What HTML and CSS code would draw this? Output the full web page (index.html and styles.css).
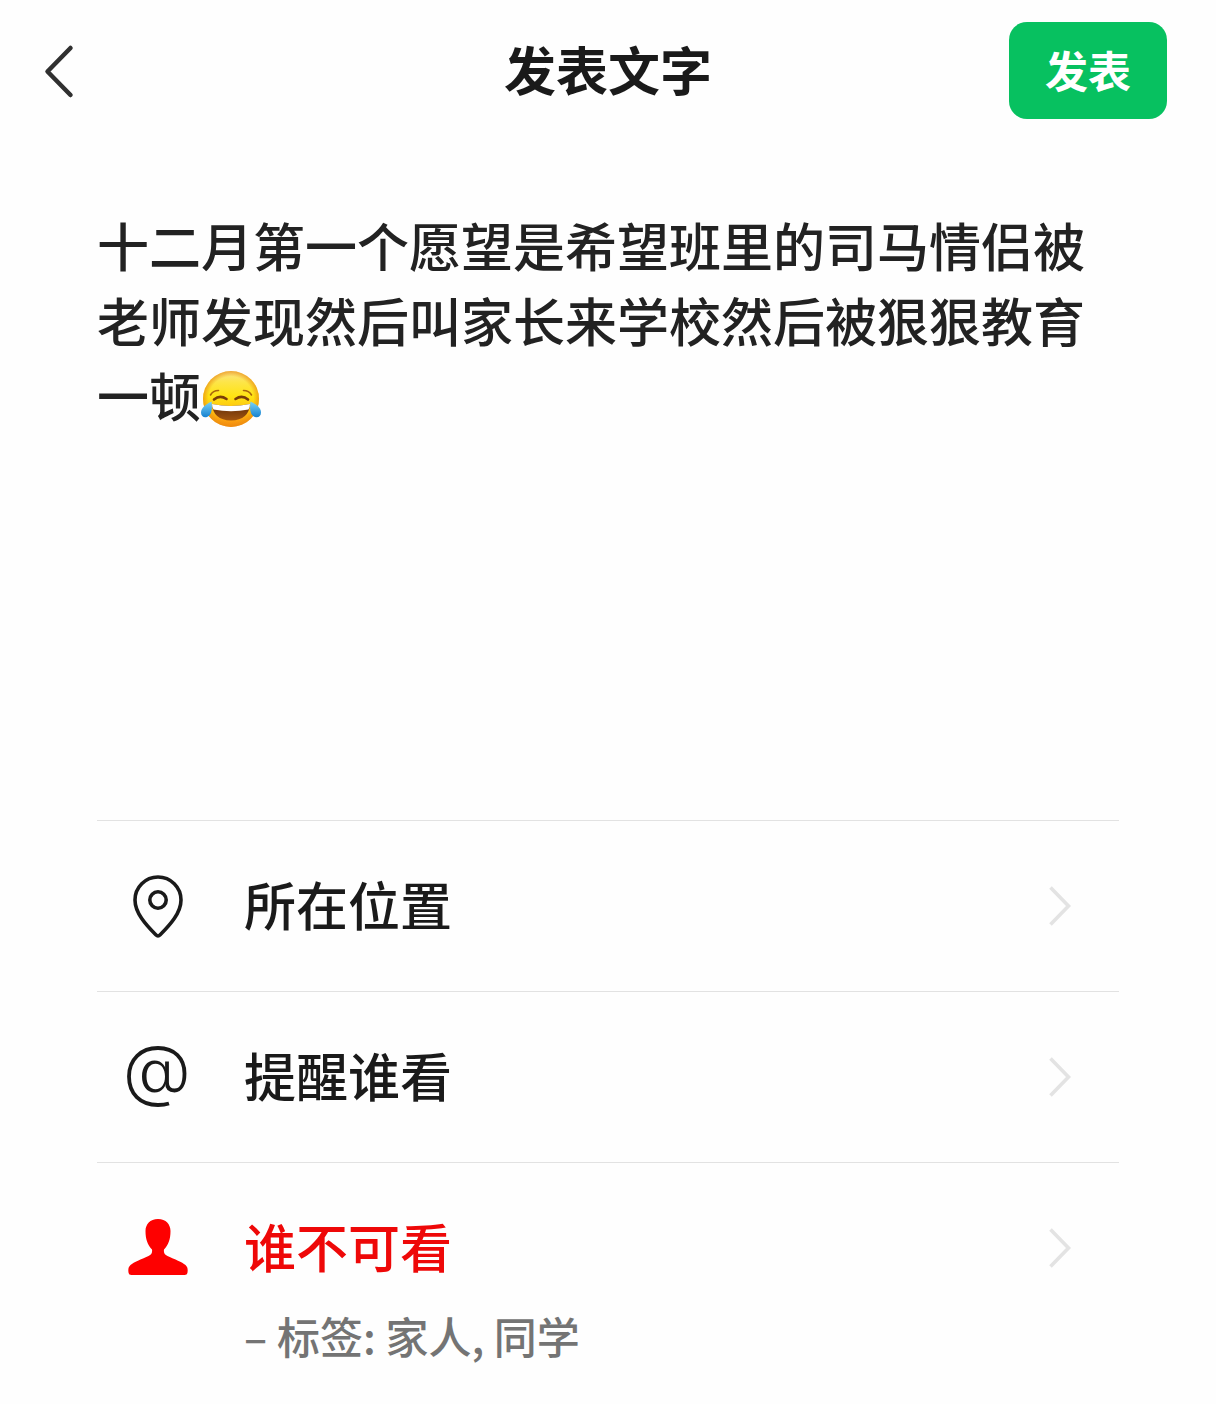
FILE: index.html
```html
<!DOCTYPE html>
<html lang="zh-CN">

<head>
    <meta charset="UTF-8">
    <meta name="viewport" content="width=device-width, initial-scale=1.0">
    <title>发表文字</title>
    <link rel="stylesheet" href="styles.css">
</head>

<body>
    <!-- 顶部导航 -->
    <header class="header">
        <button class="back" type="button" aria-label="返回">
            <svg width="32" height="56" viewBox="0 0 32 56">
                <path d="M27.500 5L4.500 28.500L27.500 52" fill="none" stroke="#303030" stroke-width="4.500" stroke-linecap="round" stroke-linejoin="round"/>
            </svg>
        </button>
        <h1 class="title">发表文字</h1>
        <button class="publish" type="submit">发表</button>
    </header>

    <main class="content">
        <!-- 正文输入 -->
        <div class="editor" role="textbox" aria-multiline="true" aria-label="正文" contenteditable="true" spellcheck="false">十二月第一个愿望是希望班里的司马情侣被老师发现然后叫家长来学校然后被狠狠教育一顿<svg class="emoji" viewBox="0 0 60 56" role="img" aria-label="笑哭">
                <defs>
                    <linearGradient id="face" x1="0" y1="0" x2="0" y2="1">
                        <stop offset="0" stop-color="#fbe38a"/>
                        <stop offset="0.2" stop-color="#fde548"/>
                        <stop offset="0.45" stop-color="#ffe312"/>
                        <stop offset="0.75" stop-color="#fdb90f"/>
                        <stop offset="1" stop-color="#f98a10"/>
                    </linearGradient>
                    <radialGradient id="edge" cx="0.5" cy="0.5" r="0.5">
                        <stop offset="0.8" stop-color="#e98c10" stop-opacity="0"/>
                        <stop offset="1" stop-color="#e98c10" stop-opacity="0.7"/>
                    </radialGradient>
                    <linearGradient id="mouth" x1="0" y1="0" x2="0" y2="1">
                        <stop offset="0" stop-color="#5f2c09"/>
                        <stop offset="1" stop-color="#a1540f"/>
                    </linearGradient>
                    <linearGradient id="tear" x1="0" y1="0" x2="0" y2="1">
                        <stop offset="0" stop-color="#7bd3f8"/>
                        <stop offset="1" stop-color="#1681cf"/>
                    </linearGradient>
                </defs>
                <circle cx="30" cy="28" r="28" fill="url(#face)"/>
                <circle cx="30" cy="28" r="28" fill="url(#edge)"/>
                <path d="M9.500 24Q12 19.500 17.500 19.500M50.500 24Q48 19.500 42.500 19.500" fill="none" stroke="#a9640c" stroke-width="1.600" stroke-linecap="round"/>
                <path d="M13 28.500Q19 23.500 25.500 28M34.500 28Q41 23.500 47 28.500" fill="none" stroke="#7a3d08" stroke-width="2.600" stroke-linecap="round"/>
                <path d="M11 33Q30 37 49 33Q48 49 30 49.500Q12 49 11 33Z" fill="url(#mouth)"/>
                <path d="M11 33Q30 37 49 33Q49 36.500 47.500 38.500Q30 42 12.500 38.500Q11 36.500 11 33Z" fill="#fff"/>
                <path d="M10.500 30.500C5 33 0 37 0 41.500C0 45.500 3 47 6 46C11 44 11.500 37 10.500 30.500Z" fill="url(#tear)"/>
                <path d="M49.500 30.500C55 33 60 37 60 41.500C60 45.500 57 47 54 46C49 44 48.500 37 49.500 30.500Z" fill="url(#tear)"/>
            </svg></div>

        <!-- 选项列表 -->
        <ul class="options">
            <li>
                <button class="option" type="button">
                    <svg class="icon" viewBox="0 0 64 64">
                        <path d="M32 62C31 62 30.500 61.500 29.800 60.800C20 51 9 39 9 26A23 23 0 0 1 55 26C55 39 44 51 34.200 60.800C33.500 61.500 33 62 32 62Z" fill="none" stroke="#1a1a1a" stroke-width="3.600"/>
                        <circle cx="32" cy="26" r="8.200" fill="none" stroke="#1a1a1a" stroke-width="3.600"/>
                    </svg>
                    <span class="label">所在位置</span>
                    <svg class="arrow" viewBox="0 0 24 40">
                        <path d="M2.500 1.500L20.500 20L2.500 38.500" fill="none" stroke="#e3e3e3" stroke-width="3.600"/>
                    </svg>
                </button>
            </li>
            <li>
                <button class="option" type="button">
                    <svg class="icon" viewBox="0 0 64 64">
                        <path d="M43 58.500C39.500 59.600 36 60 32 60C14 60 3 48.500 3 31.500C3 14.500 15 3 32 3C48.500 3 58.500 13.500 58.500 28.500C58.500 39.500 54.500 45.500 48.500 45.500C43.500 45.500 41 42.500 41 37.500V16.500" fill="none" stroke="#1a1a1a" stroke-width="3.800"/>
                        <path fill-rule="evenodd" d="M28.500 15.500C36 15.500 41 21.500 41 31.500C41 41.500 36 47.500 28.500 47.500C21 47.500 16 41 16 31.500C16 22 21 15.500 28.500 15.500ZM29.500 18.800C24 18.800 20.500 23.500 20.500 31.500C20.500 39.500 24 44.200 29.500 44.200C35.500 44.200 39 39 39 31.500C39 24 35.500 18.800 29.500 18.800Z" fill="#1a1a1a"/>
                    </svg>
                    <span class="label">提醒谁看</span>
                    <svg class="arrow" viewBox="0 0 24 40">
                        <path d="M2.500 1.500L20.500 20L2.500 38.500" fill="none" stroke="#e3e3e3" stroke-width="3.600"/>
                    </svg>
                </button>
            </li>
            <li>
                <button class="option option-hidden" type="button">
                    <svg class="icon" viewBox="0 0 64 64">
                        <path d="M32 3C40 3 44.500 8.500 44.500 15C44.500 23 42.500 29 38 33.500C37.500 37 38.500 38.500 41.500 40C49 43.500 56 46 59.500 49C61.500 51 62 53 61.500 56.500C61.200 58.200 60.300 59 58.500 59H5.500C3.700 59 2.800 58.200 2.500 56.500C2 53 2.500 51 4.500 49C8 46 15 43.500 22.500 40C25.500 38.500 26.500 37 26 33.500C21.500 29 19.500 23 19.500 15C19.500 8.500 24 3 32 3Z" fill="#fe0000"/>
                    </svg>
                    <span class="label">谁不可看</span>
                    <svg class="arrow" viewBox="0 0 24 40">
                        <path d="M2.500 1.500L20.500 20L2.500 38.500" fill="none" stroke="#e3e3e3" stroke-width="3.600"/>
                    </svg>
                </button>
                <p class="tags">– 标签: 家人, 同学</p>
            </li>
        </ul>
    </main>
</body>

</html>
```

FILE: styles.css
```css
* {
    box-sizing: border-box;
}

body {
    font-family: "Noto Sans CJK SC", sans-serif;
    font-weight: 500;
    background-color: #fefefe;
    color: #1a1a1a;
    margin: 0;
}

button {
    font: inherit;
    color: inherit;
    background: none;
    border: none;
    padding: 0;
    cursor: pointer;
}

svg {
    display: block;
}

.header {
    display: grid;
    grid-template-columns: 1fr auto 1fr;
    align-items: center;
    padding: 22px 49px 22px 43px;
}

.back {
    justify-self: start;
}

.title {
    margin: 0;
    padding: 0 0 4px 6px;
    font-size: 52px;
    font-weight: 700;
    line-height: 76px;
}

.publish {
    justify-self: end;
    width: 158px;
    height: 97px;
    padding-bottom: 4px;
    background-color: #07c160;
    color: #fff;
    border-radius: 18px;
    font-size: 43px;
    font-weight: 700;
}

.content {
    padding: 66px 97px 40px;
}

.editor {
    min-height: 613px;
    padding-right: 32px;
    font-size: 52px;
    line-height: 75px;
    color: #222;
    outline: none;
}

.emoji {
    display: inline-block;
    width: 60px;
    height: 56px;
    vertical-align: -10px;
}

.options {
    list-style: none;
    margin: 0;
    padding: 0;
}

.options li {
    border-top: 1px solid #e2e2e2;
}

.option {
    display: flex;
    align-items: center;
    width: 100%;
    height: 170px;
    padding: 0 47px 0 29px;
    text-align: left;
}

.icon {
    width: 64px;
    height: 64px;
}

.label {
    flex: 1;
    margin-left: 54px;
    padding-bottom: 4px;
    font-size: 52px;
    line-height: 76px;
}

.arrow {
    width: 24px;
    height: 40px;
}

.option-hidden {
    color: #ee0808;
}

.tags {
    margin: -28px 0 0 147px;
    font-size: 43px;
    line-height: 60px;
    color: #747474;
}
```
